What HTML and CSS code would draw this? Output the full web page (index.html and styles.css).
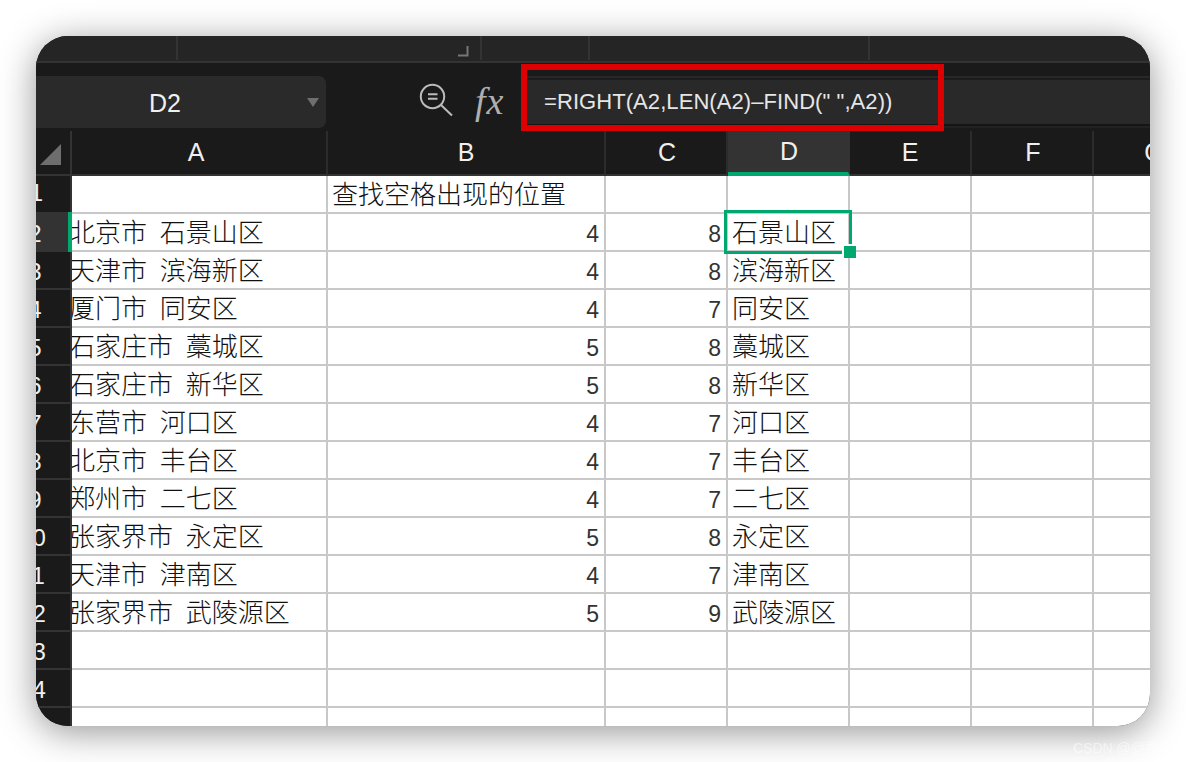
FILE: index.html
```html
<!DOCTYPE html>
<html lang="zh">
<head>
<meta charset="utf-8">
<title>Spreadsheet</title>
<link rel="stylesheet" href="styles.css">
</head>
<body>
<main class="window">
  <div class="tabs">
    <span class="tab t1"></span>
    <span class="tab t2"><svg class="corner" width="12" height="12" viewBox="0 0 12 12"><path d="M1 10.5H10.5V1" fill="none" stroke="#777" stroke-width="2"/></svg></span>
    <span class="tab t3"></span>
    <span class="tab t4"></span>
    <span class="tab t5"></span>
  </div>
  <div class="formula-bar">
    <div class="name-box"><span class="name-text">D2</span><svg class="caret" width="12" height="9" viewBox="0 0 12 9"><path d="M0 0H12L6 9Z" fill="#6f6f6f"/></svg></div>
    <svg class="search" width="36" height="36" viewBox="0 0 36 36"><circle cx="15.5" cy="13.5" r="11.7" fill="none" stroke="#bbb" stroke-width="2"/><path d="M11 11.2H20.5M11 15.8H20.5" stroke="#bbb" stroke-width="2"/><path d="M24 22L35 32.5" stroke="#bbb" stroke-width="2"/></svg>
    <span class="fx">fx</span>
    <div class="formula-input">=RIGHT(A2,LEN(A2)–FIND(" ",A2))</div>
    <div class="red-frame"></div>
  </div>
  <div class="sheet">
    <table class="grid">
      <colgroup><col class="c-head"><col class="c-a"><col class="c-b"><col class="c-n"><col class="c-n"><col class="c-n"><col class="c-n"><col class="c-n"></colgroup>
      <thead>
        <tr><th class="corner-cell"><svg class="tri" width="21" height="21" viewBox="0 0 21 21"><path d="M21 0V21H0Z" fill="#6e6e6e"/></svg></th><th class="col-a">A</th><th>B</th><th class="col-r">C</th><th class="active-col col-r">D</th><th>E</th><th class="col-r">F</th><th>G</th></tr>
      </thead>
      <tbody>
        <tr><th class="one">1</th><td></td><td class="txt">查找空格出现的位置</td><td></td><td></td><td></td><td></td><td></td></tr>
        <tr><th class="active-row">2</th><td class="txt name">北京市 石景山区</td><td class="num">4</td><td class="num">8</td><td class="txt">石景山区</td><td></td><td></td><td></td></tr>
        <tr><th>3</th><td class="txt name">天津市 滨海新区</td><td class="num">4</td><td class="num">8</td><td class="txt">滨海新区</td><td></td><td></td><td></td></tr>
        <tr><th>4</th><td class="txt name">厦门市 同安区</td><td class="num">4</td><td class="num">7</td><td class="txt">同安区</td><td></td><td></td><td></td></tr>
        <tr><th>5</th><td class="txt name">石家庄市 藁城区</td><td class="num">5</td><td class="num">8</td><td class="txt">藁城区</td><td></td><td></td><td></td></tr>
        <tr><th>6</th><td class="txt name">石家庄市 新华区</td><td class="num">5</td><td class="num">8</td><td class="txt">新华区</td><td></td><td></td><td></td></tr>
        <tr><th>7</th><td class="txt name">东营市 河口区</td><td class="num">4</td><td class="num">7</td><td class="txt">河口区</td><td></td><td></td><td></td></tr>
        <tr><th>8</th><td class="txt name">北京市 丰台区</td><td class="num">4</td><td class="num">7</td><td class="txt">丰台区</td><td></td><td></td><td></td></tr>
        <tr><th>9</th><td class="txt name">郑州市 二七区</td><td class="num">4</td><td class="num">7</td><td class="txt">二七区</td><td></td><td></td><td></td></tr>
        <tr><th class="two">10</th><td class="txt name">张家界市 永定区</td><td class="num">5</td><td class="num">8</td><td class="txt">永定区</td><td></td><td></td><td></td></tr>
        <tr><th class="two">11</th><td class="txt name">天津市 津南区</td><td class="num">4</td><td class="num">7</td><td class="txt">津南区</td><td></td><td></td><td></td></tr>
        <tr><th class="two">12</th><td class="txt name">张家界市 武陵源区</td><td class="num">5</td><td class="num">9</td><td class="txt">武陵源区</td><td></td><td></td><td></td></tr>
        <tr><th class="two">13</th><td></td><td></td><td></td><td></td><td></td><td></td><td></td></tr>
        <tr><th class="two">14</th><td></td><td></td><td></td><td></td><td></td><td></td><td></td></tr>
        <tr><th class="two">15</th><td></td><td></td><td></td><td></td><td></td><td></td><td></td></tr>
      </tbody>
    </table>
    <div class="selection"><span class="handle"></span></div>
    <div class="row-mark"></div>
  </div>
</main>
<div class="watermark">CSDN @@秃头</div>
</body>
</html>
```
FILE: styles.css
```css
html, body {
  margin: 0;
  padding: 0;
  background: #fff;
}
body {
  padding: 36px;
  height: 690px;
  overflow: hidden;
  position: relative;
  font-family: "Liberation Sans", "Noto Sans CJK SC", sans-serif;
}
.window {
  width: 1114px;
  height: 690px;
  border-radius: 32px;
  overflow: hidden;
  background: #1a1a1a;
  box-shadow: 0 6px 36px rgba(0, 0, 0, 0.42);
  display: flex;
  flex-direction: column;
}
.tabs {
  height: 25px;
  flex: none;
  display: flex;
  background: #252525;
  border-bottom: 2px solid #333;
}
.tab {
  height: 24px;
  border-right: 2px solid #333;
  box-sizing: border-box;
  position: relative;
}
.t1 { width: 142px; }
.t2 { width: 304px; }
.t3 { width: 108px; }
.t4 { width: 280px; }
.t5 { flex: 1; border-right: 0; }
.corner {
  position: absolute;
  right: 11px;
  top: 9px;
}
.formula-bar {
  height: 68px;
  flex: none;
  display: flex;
  align-items: flex-start;
  background: #1a1a1a;
  position: relative;
  padding-top: 13px;
  box-sizing: border-box;
}
.name-box {
  margin-left: -32px;
  width: 322px;
  height: 52px;
  flex: none;
  background: #2a2a2a;
  border-radius: 7px;
  display: flex;
  align-items: center;
  justify-content: center;
  position: relative;
  color: #f0f0f0;
  font-size: 25px;
}
.name-text {
  margin-top: 2px;
}
.caret {
  position: absolute;
  right: 7px;
  top: 22px;
}
.search {
  flex: none;
  margin: 7px 0 0 91px;
}
.fx {
  flex: none;
  width: 52px;
  margin-left: 22px;
  font-family: "Liberation Serif", serif;
  font-style: italic;
  font-size: 38px;
  line-height: 50px;
  color: #b0b0b0;
  letter-spacing: 1px;
}
.formula-input {
  flex: 1;
  height: 52px;
  box-sizing: border-box;
  background: #292929;
  border-top: 2px solid #272727;
  border-bottom: 2px solid #222;
  box-shadow: inset 0 2px 0 #1c1c1c, inset 0 -2px 0 #161616;
  padding-left: 17px;
  color: #e6e6e6;
  font-size: 22px;
  letter-spacing: 0.07px;
  line-height: 48px;
  white-space: pre;
}
.red-frame {
  position: absolute;
  left: 485px;
  top: 1px;
  width: 423px;
  height: 67px;
  box-sizing: border-box;
  border: 6px solid #dd0000;
}
.sheet {
  position: relative;
  flex: 1;
  min-height: 0;
}
.grid {
  table-layout: fixed;
  width: 1216px;
  margin-left: -36px;
  border-collapse: separate;
  border-spacing: 0;
}
.c-head { width: 72px; }
.c-a { width: 256px; }
.c-b { width: 278px; }
.c-n { width: 122px; }
.grid th, .grid td {
  box-sizing: border-box;
  padding: 0;
  height: 38px;
  line-height: 36px;
  overflow: hidden;
  white-space: nowrap;
}
.grid thead th {
  height: 45px;
  line-height: 43px;
  background: #1a1a1a;
  border-right: 2px solid #2c2c2c;
  border-bottom: 2px solid #333;
  color: #f0f0f0;
  font-weight: 400;
  font-size: 25px;
  text-align: center;
}
.grid thead .col-a {
  padding-right: 6px;
}
.grid thead .col-r {
  padding-left: 2px;
}
.grid thead .corner-cell {
  position: relative;
  border-right-color: #333;
}
.tri {
  position: absolute;
  left: 40px;
  top: 13px;
}
.grid thead .active-col {
  background: #333;
  border-bottom-color: #00a870;
  border-bottom-width: 4px;
  border-right-color: #333;
  line-height: 41px;
}
.grid tbody th {
  background: #1a1a1a;
  border-right: 2px solid #333;
  border-bottom: 2px solid #333;
  color: #f0f0f0;
  font-weight: 400;
  font-size: 24px;
  text-align: center;
  padding-top: 4px;
  line-height: 32px;
}
.grid tbody .one {
  padding-left: 3px;
  padding-top: 0;
  padding-bottom: 2px;
  line-height: 34px;
}
.grid tbody .two {
  padding-right: 5px;
}
.grid tbody .active-row {
  background: #333;
}
.grid td {
  background: #fff;
  border-right: 2px solid #c8c8c8;
  border-bottom: 2px solid #c8c8c8;
  color: #111;
}
.grid .txt {
  font-family: "Noto Sans CJK SC", sans-serif;
  font-weight: 300;
  font-size: 26px;
  padding-left: 4px;
  padding-bottom: 2px;
  line-height: 34px;
}
.grid .name {
  padding-left: 0;
  text-indent: -3px;
  word-spacing: 7px;
}
.grid .num {
  font-size: 23px;
  text-align: right;
  padding-right: 5px;
  padding-top: 4px;
  line-height: 32px;
  color: #333;
}
.selection {
  position: absolute;
  left: 688px;
  top: 79px;
  width: 128px;
  height: 44px;
  box-sizing: border-box;
  border: 3px solid #00a870;
}
.handle {
  position: absolute;
  right: -7px;
  bottom: -7px;
  width: 12px;
  height: 12px;
  background: #00a870;
  border-left: 2px solid #fff;
  border-top: 2px solid #fff;
}
.row-mark {
  position: absolute;
  left: 32px;
  top: 81px;
  width: 4px;
  height: 40px;
  background: #00a870;
}
.watermark {
  position: absolute;
  left: 1073px;
  top: 737px;
  font-size: 14px;
  color: rgba(255, 255, 255, 0.55);
  white-space: nowrap;
}
```
